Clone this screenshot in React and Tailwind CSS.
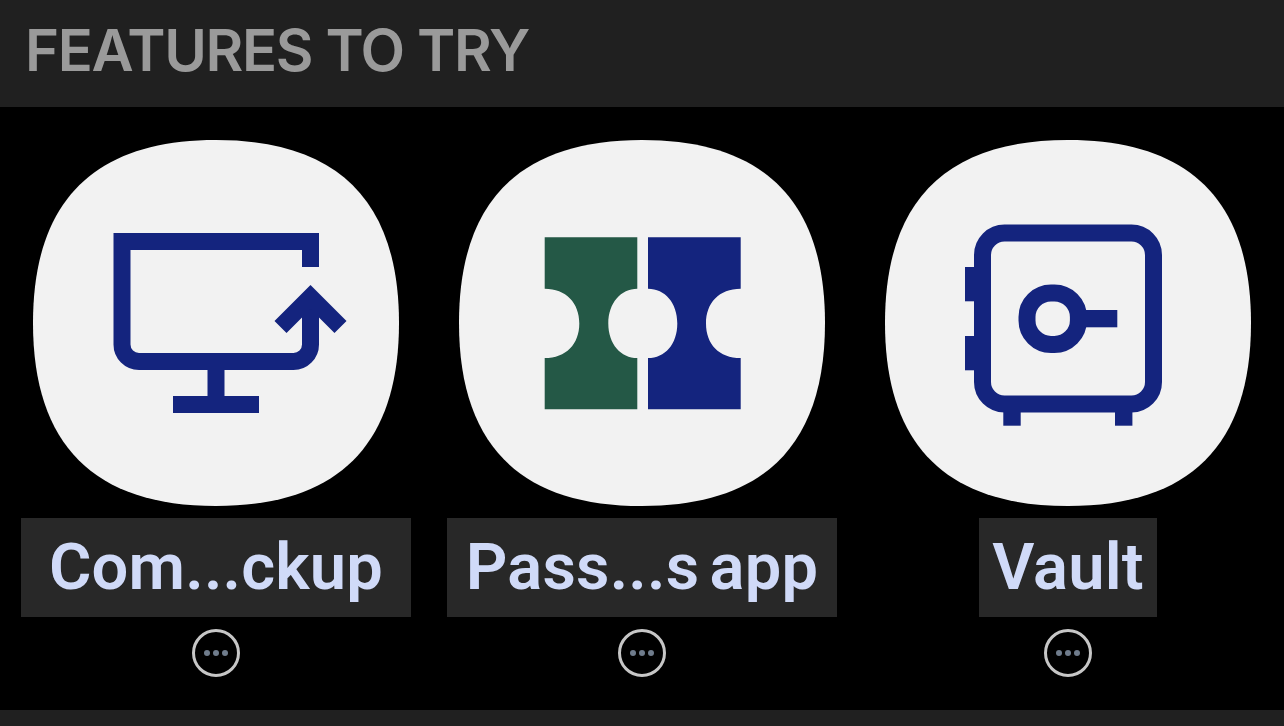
import React from "react";

const NAVY = "#14247e";
const GREEN = "#245846";

const MonitorIcon = () => (
  <>
    <path
      d="M277.5 127V101.5H89V204.5a17 17 0 0 0 17 17H260.5a17 17 0 0 0 17-17V157"
      fill="none"
      stroke={NAVY}
      strokeWidth="17"
    />
    <path d="M247.5 187L277.5 157L307.5 187" fill="none" stroke={NAVY} strokeWidth="17" />
    <path d="M174.5 230H191.5V256H226V273H140V256H174.5Z" fill={NAVY} />
  </>
);

const TicketIcon = () => (
  <>
    <path
      d="M85.7 97.3H178.3V148.7C162 148.7 149.3 163 149.3 183.4C149.3 204 162 218 178.3 218V269.3H85.7V218C107 218 120.3 204 120.3 183.4C120.3 163 107 148.7 85.7 148.7Z"
      fill={GREEN}
    />
    <path
      d="M189 97.3H281.7V148.7C260 148.7 247 163 247 183.4C247 204 260 218 281.7 218V269.3H189V218C206 218 218.3 204 218.3 183.4C218.3 163 206 148.7 189 148.7Z"
      fill={NAVY}
    />
  </>
);

const VaultIcon = () => (
  <>
    <rect x="97.5" y="93" width="171" height="171" rx="22" fill="none" stroke={NAVY} strokeWidth="17" />
    <rect x="80" y="127" width="10" height="34.3" fill={NAVY} />
    <rect x="80" y="196" width="10" height="34.3" fill={NAVY} />
    <rect x="118.3" y="271" width="17.4" height="14.7" fill={NAVY} />
    <rect x="230" y="271" width="17.4" height="14.7" fill={NAVY} />
    <rect x="142" y="153" width="51.4" height="51.4" rx="24" fill="none" stroke={NAVY} strokeWidth="17" />
    <rect x="199" y="170" width="33.3" height="17.3" fill={NAVY} />
  </>
);

const features = [
  { label: "Com...ckup", icon: <MonitorIcon />, boxClass: "w-[390px]" },
  { label: "Pass...s app", icon: <TicketIcon />, boxClass: "w-[390px]" },
  { label: "Vault", icon: <VaultIcon />, boxClass: "w-[178px]" },
];

const FeatureItem = ({ label, icon, boxClass }) => (
  <div className="flex flex-col items-center">
    <svg width="366" height="366" viewBox="0 0 366 366" className="block">
      <path
        d="M183 0C305 0 366 61 366 183C366 305 305 366 183 366C61 366 0 305 0 183C0 61 61 0 183 0Z"
        fill="#f2f2f2"
      />
      {icon}
    </svg>
    <div className={`mt-3 h-[99px] bg-[#282828] flex items-center justify-center ${boxClass}`}>
      <span className="text-[65px] leading-none font-semibold tracking-[0.2px] [word-spacing:-6px] text-[#d0daf8] whitespace-nowrap">
        {label}
      </span>
    </div>
    <button className="mt-3 w-12 h-12 rounded-full border-[3px] border-[#c6c6c6] flex items-center justify-center gap-[3px]">
      <span className="w-[6px] h-[6px] rounded-full bg-[#6f7c8c]" />
      <span className="w-[6px] h-[6px] rounded-full bg-[#6f7c8c]" />
      <span className="w-[6px] h-[6px] rounded-full bg-[#6f7c8c]" />
    </button>
  </div>
);

export default function App() {
  return (
    <div className="h-[726px] bg-black flex flex-col font-['Roboto','Liberation_Sans',sans-serif]">
      <div className="h-[107px] bg-[#202020] flex items-center pl-[25px] pb-[8px]">
        <h2 className="font-['Inter','Liberation_Sans',sans-serif] text-[58px] leading-none font-semibold tracking-[-1.35px] text-[#9a9a9a] whitespace-nowrap">
          FEATURES TO TRY
        </h2>
      </div>
      <div className="grid grid-cols-3 px-[3px] pt-[33px] pb-[33px]">
        {features.map((f) => (
          <FeatureItem key={f.label} label={f.label} icon={f.icon} boxClass={f.boxClass} />
        ))}
      </div>
      <div className="flex-1 bg-[#202020]" />
    </div>
  );
}
